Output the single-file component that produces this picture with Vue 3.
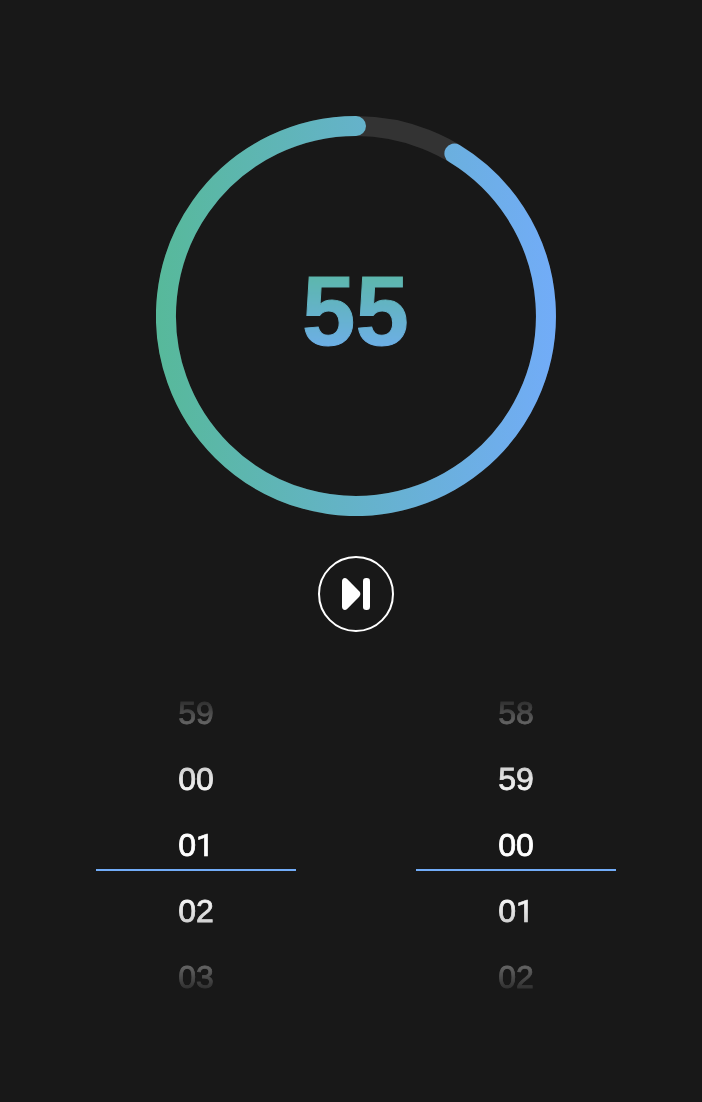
<script setup>
const seconds = 55
const wheels = [
  ['59', '00', '01', '02', '03'],
  ['58', '59', '00', '01', '02'],
]
</script>

<template>
  <main class="timer">
    <section class="dial">
      <svg class="ring" width="400" height="400" viewBox="0 0 400 400">
        <defs>
          <linearGradient id="ringGradient" gradientUnits="userSpaceOnUse" x1="0" y1="0" x2="400" y2="0">
            <stop offset="0" stop-color="#57b99a" />
            <stop offset="1" stop-color="#72acf8" />
          </linearGradient>
        </defs>
        <circle class="track" cx="200" cy="200" r="190" />
        <path class="arc" d="M298.4 37.5A190 190 0 1 1 200 10" />
      </svg>
      <span class="value">{{ seconds }}</span>
    </section>

    <button class="skip" aria-label="Skip">
      <svg width="72" height="72" viewBox="0 0 72 72">
        <path d="M22 23.5C22 20 25 18.8 27.4 21.2L39.2 33.3Q41.6 36 39.2 38.7L27.4 50.8C25 53.2 22 52 22 48.5Z" />
        <rect x="43" y="20" width="7" height="32" rx="3.2" />
      </svg>
    </button>

    <section class="wheels">
      <div v-for="(wheel, i) in wheels" :key="i" class="wheel">
        <div class="numbers">
          <div v-for="n in wheel" :key="n" class="number">
            <span v-for="(d, j) in n" :key="j" :class="['digit', { one: d === '1' }]">{{ d }}</span>
          </div>
        </div>
        <div class="marker"></div>
      </div>
    </section>
  </main>
</template>

<style>
html,
body {
  background: #181818;
}
</style>

<style scoped>
.timer {
  display: flex;
  flex-direction: column;
  align-items: center;
  box-sizing: border-box;
  width: 702px;
  height: 1102px;
  padding: 116px 0 0 10px;
  overflow: hidden;
  background: #181818;
  color: #fff;
  font-family: "Liberation Sans", Arial, sans-serif;
}

.dial {
  display: grid;
  place-items: center;
  flex: none;
  width: 400px;
  height: 400px;
}

.ring,
.value {
  grid-area: 1 / 1;
}

.track,
.arc {
  fill: none;
  stroke-width: 20;
}

.track {
  stroke: #333;
}

.arc {
  stroke: url(#ringGradient);
  stroke-linecap: round;
}

.value {
  font-size: 96px;
  font-weight: 700;
  line-height: 112px;
  background: linear-gradient(#57b99a, #72acf8);
  -webkit-background-clip: text;
  background-clip: text;
  color: transparent;
  -webkit-text-stroke: 1px transparent;
  transform: translate(-0.5px, -4.5px) scaleY(1.03);
}

.skip {
  flex: none;
  box-sizing: border-box;
  width: 76px;
  height: 76px;
  margin: 40px 0 0;
  padding: 0;
  border: 2px solid #fff;
  border-radius: 50%;
  background: transparent;
}

.skip svg {
  display: block;
  fill: #fff;
}

.wheels {
  display: flex;
  gap: 120px;
  margin-top: 48px;
}

.wheel {
  display: grid;
  width: 200px;
  height: 330px;
}

.numbers,
.marker {
  grid-area: 1 / 1;
}

.numbers {
  display: flex;
  flex-direction: column;
  -webkit-mask-image: linear-gradient(transparent 3%, rgba(0, 0, 0, 0.1) 6.4%, rgba(0, 0, 0, 0.34) 13.6%, rgba(0, 0, 0, 0.79) 26%, rgba(0, 0, 0, 0.95) 33%, #000 38%, #000 62%, rgba(0, 0, 0, 0.95) 67%, rgba(0, 0, 0, 0.79) 74%, rgba(0, 0, 0, 0.34) 86.4%, rgba(0, 0, 0, 0.1) 93.6%, transparent 97%);
  mask-image: linear-gradient(transparent 3%, rgba(0, 0, 0, 0.1) 6.4%, rgba(0, 0, 0, 0.34) 13.6%, rgba(0, 0, 0, 0.79) 26%, rgba(0, 0, 0, 0.95) 33%, #000 38%, #000 62%, rgba(0, 0, 0, 0.95) 67%, rgba(0, 0, 0, 0.79) 74%, rgba(0, 0, 0, 0.34) 86.4%, rgba(0, 0, 0, 0.1) 93.6%, transparent 97%);
}

.number {
  display: flex;
  justify-content: center;
  height: 66px;
  font-size: 32px;
  line-height: 66px;
  -webkit-text-stroke: 0.8px #fff;
}

.digit {
  width: 17.8px;
}

.one {
  font-family: Roboto, sans-serif;
  -webkit-text-stroke: 0.7px #fff;
}

.marker {
  height: 2px;
  margin-top: 189px;
  background: #72acf8;
}
</style>
